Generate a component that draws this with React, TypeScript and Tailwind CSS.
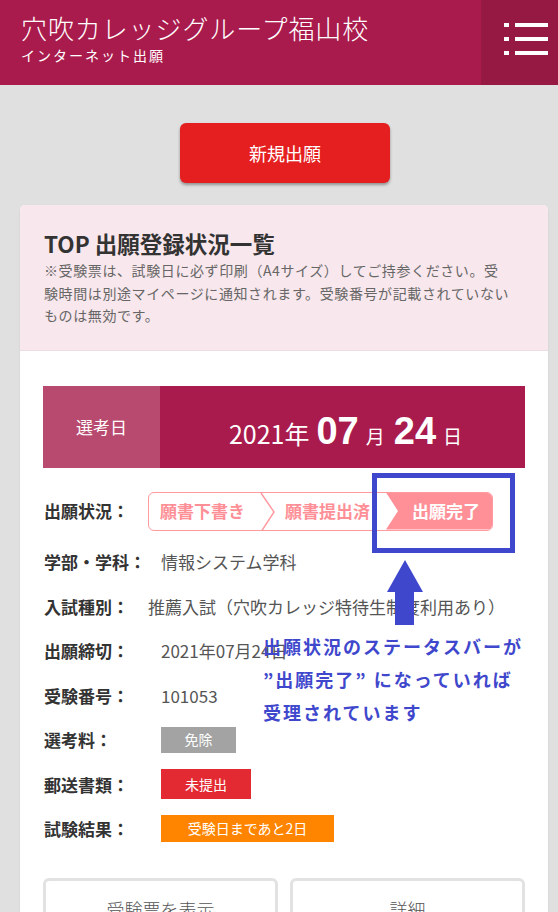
import React from 'react';

const rows = [
  { label: '学部・学科：', value: '情報システム学科', w: 'w-[118px]' },
  { label: '入試種別：', value: '推薦入試（穴吹カレッジ特待生制度利用あり）', w: 'w-[105px]' },
  { label: '出願締切：', value: '2021年07月24日', w: 'w-[118px]' },
  { label: '受験番号：', value: '101053', w: 'w-[118px]' },
];

const badges = [
  { label: '選考料：', text: '免除', cls: 'bg-[#a3a3a3] w-[75px] h-[26px]' },
  { label: '郵送書類：', text: '未提出', cls: 'bg-[#e32a33] w-[90px] h-[30px]' },
  { label: '試験結果：', text: '受験日まであと2日', cls: 'bg-[#ff8500] w-[173px] h-[27px]' },
];

// ------------------------------
// STATUS BAR
// ------------------------------
const StatusBar: React.FC = () => (
  <div className="relative flex h-[39px] w-[345px] rounded-[6px] border-[1.5px] border-[#ff9aa1] overflow-hidden">
    <div className="flex items-center w-[112px] pl-[11px] text-[17px] font-bold text-[#ff8f97]">
      願書下書き
    </div>
    <svg width="16" height="39" viewBox="0 0 16 39" className="shrink-0 -ml-[1px]">
      <polyline points="1,0 14,19 1,39" fill="none" stroke="#ff9aa1" strokeWidth="1.5" />
    </svg>
    <div className="flex items-center w-[110px] pl-[9px] text-[17px] font-bold text-[#ff8f97] whitespace-nowrap">
      願書提出済
    </div>
    <div className="flex-1 flex items-center justify-center pl-[14px] bg-[#ff9098] text-[17px] font-bold text-white [clip-path:polygon(0_0,100%_0,100%_100%,0_100%,12px_50%)]">
      出願完了
    </div>
  </div>
);

export default function App() {
  return (
    <div className="relative min-h-[912px] bg-[#e0e0e0] font-['Noto_Sans_CJK_JP','Noto_Sans',sans-serif] pb-10">
      {/* header */}
      <header className="flex h-[85px] bg-[#aa1b4d] text-white">
        <div className="flex-1 pl-[21px] pt-[10px]">
          <h1 className="text-[26px] leading-[36px] font-light tracking-[0.9px]">穴吹カレッジグループ福山校</h1>
          <p className="text-[14px] leading-[18px] tracking-[2px]">インターネット出願</p>
        </div>
        <div className="w-[77px] bg-[#961944] flex flex-col gap-[10px] pt-[23px] pl-[23px]">
          {[0, 1, 2].map((i) => (
            <div key={i} className="flex items-center gap-[6px]">
              <span className="w-[5px] h-[4px] bg-white" />
              <span className="w-[33px] h-[4px] bg-white" />
            </div>
          ))}
        </div>
      </header>

      <div className="flex justify-center pt-[38px] pl-[12px]">
        <button className="w-[210px] h-[60px] rounded-[6px] bg-[#e51f1f] text-white text-[18px] shadow-[0_2px_3px_rgba(0,0,0,0.35)]">
          新規出願
        </button>
      </div>

      {/* card */}
      <div className="ml-[20px] mr-[10px] mt-[22px] rounded-[5px] bg-white shadow-[0_1px_2px_rgba(0,0,0,0.1)] overflow-hidden">
        <div className="bg-[#f8e7ec] px-[24px] pt-[23px] pb-[23px] border-b border-[#ebdde1]">
          <h2 className="text-[22.5px] leading-[31px] font-bold text-[#333]">TOP 出願登録状況一覧</h2>
          <p className="text-[14px] leading-[22.5px] text-[#666] tracking-[0.6px]">
            ※受験票は、試験日に必ず印刷（A4サイズ）してご持参ください。受<br />
            験時間は別途マイページに通知されます。受験番号が記載されていない<br />
            ものは無効です。
          </p>
        </div>

        <div className="px-[23px] pt-[35px]">
          <div className="flex h-[82px] text-white">
            <div className="w-[117px] bg-[#b94a6f] flex items-center justify-center text-[17px]">選考日</div>
            <div className="flex-1 bg-[#aa1b4d] flex items-baseline justify-center pt-[17px] pl-[6px]">
              <span className="text-[25px]">2021年</span>
              <span className="text-[38px] font-bold ml-[7px] font-['Liberation_Sans',sans-serif]">07</span>
              <span className="text-[19px] ml-[7px]">月</span>
              <span className="text-[38px] font-bold ml-[9px] font-['Liberation_Sans',sans-serif]">24</span>
              <span className="text-[19px] ml-[7px]">日</span>
            </div>
          </div>

          <div className="flex items-center mt-[24px]">
            <div className="w-[105px] pl-[1px] text-[17px] font-bold text-[#333]">出願状況：</div>
            <StatusBar />
          </div>

          <div className="mt-[9px]">
            {rows.map((r) => (
              <div key={r.label} className="flex items-center h-[44.5px] text-[17px]">
                <div className={`${r.w} pl-[1px] font-bold text-[#333] shrink-0`}>{r.label}</div>
                <div className="text-[#555] whitespace-nowrap">{r.value}</div>
              </div>
            ))}
            {badges.map((b) => (
              <div key={b.label} className="flex items-center h-[44.5px] text-[17px]">
                <div className="w-[118px] pl-[1px] font-bold text-[#333] shrink-0">{b.label}</div>
                <div className={`${b.cls} flex items-center justify-center text-[14px] text-white`}>{b.text}</div>
              </div>
            ))}
          </div>

          <div className="grid grid-cols-2 gap-[12px] mt-[27px] pb-[20px]">
            <button className="h-[62px] rounded-[6px] border-[3px] border-[#e2e2e2] text-[18px] font-light text-[#555]">受験票を表示</button>
            <button className="h-[62px] rounded-[6px] border-[3px] border-[#e2e2e2] text-[18px] font-light text-[#555]">詳細</button>
          </div>
        </div>
      </div>

      {/* annotation overlay */}
      <div className="absolute left-[372px] top-[473px] w-[143px] h-[80px] border-[5px] border-[#3f48cc]" />
      <svg className="absolute left-[386px] top-[560px]" width="38" height="66" viewBox="0 0 38 66">
        <polygon points="19,0 37,32 28,32 28,65 9,65 9,32 1,32" fill="#3f48cc" />
      </svg>
      <div className="absolute left-[263px] top-[630px] text-[18px] leading-[33px] font-bold text-[#3f48cc] tracking-[2px] whitespace-nowrap">
        <p>出願状況のステータスバーが</p>
        <p>”出願完了” になっていれば</p>
        <p>受理されています</p>
      </div>
    </div>
  );
}
